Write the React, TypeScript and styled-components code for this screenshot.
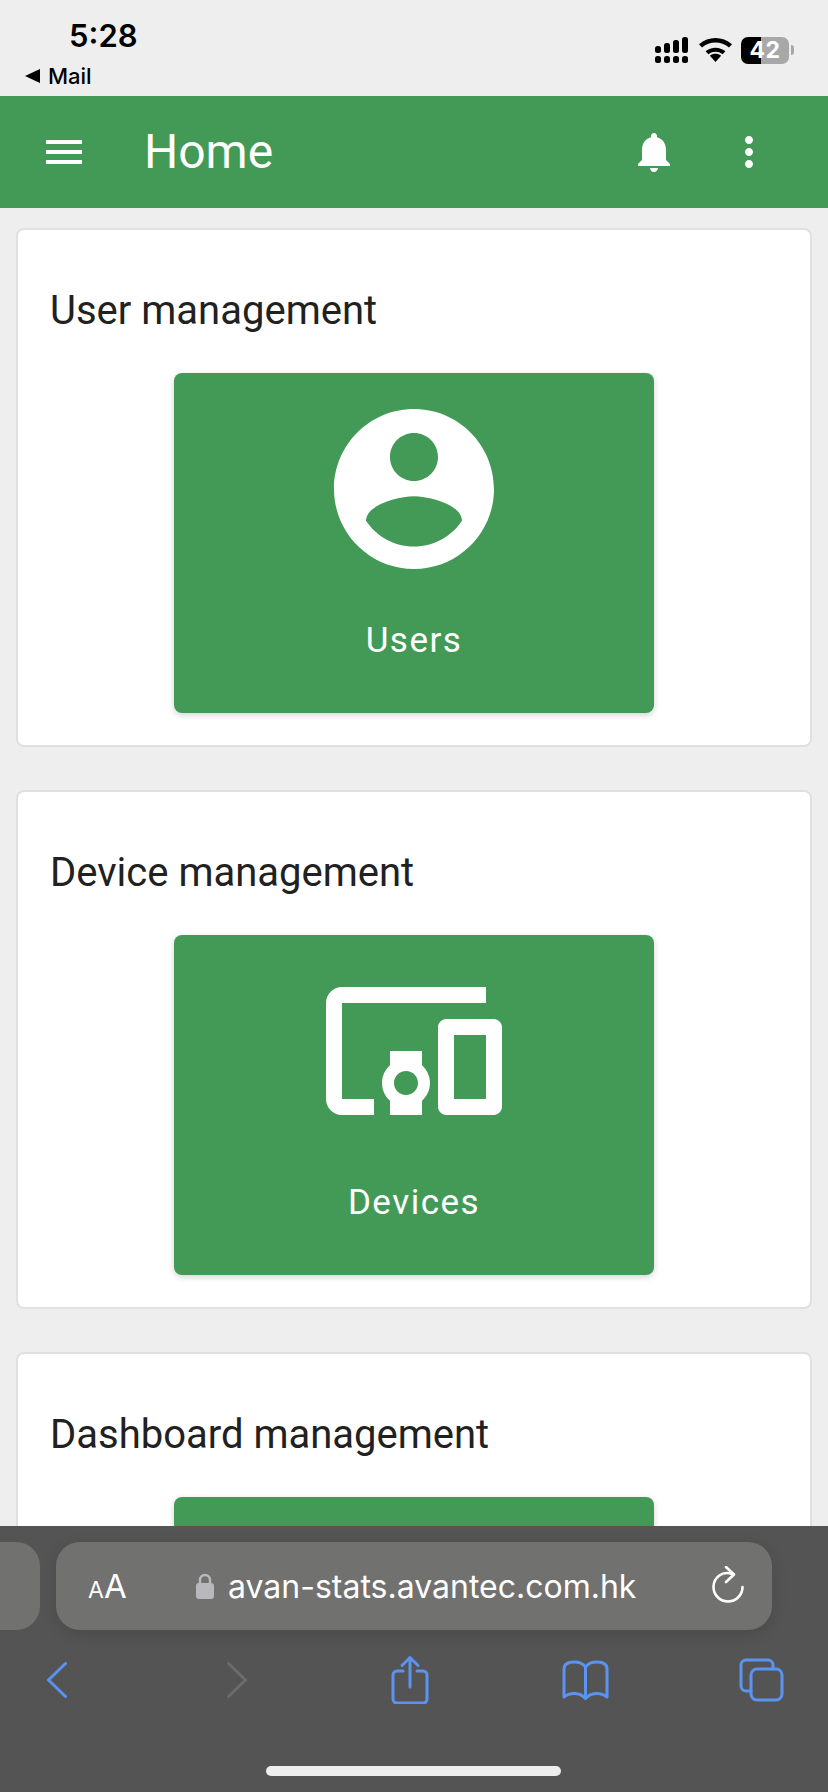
import styled, { createGlobalStyle } from 'styled-components';

const GlobalStyle = createGlobalStyle`
  html, body {
    margin: 0;
    padding: 0;
    background: #eeeeee;
    font-family: Roboto, "Liberation Sans", sans-serif;
  }
  * {
    box-sizing: border-box;
  }
`;

const Page = styled.div`
  position: relative;
  width: 828px;
  height: 1792px;
  overflow: hidden;
  background: #eeeeee;
`;

const StatusBar = styled.div`
  display: flex;
  justify-content: space-between;
  height: 96px;
  padding: 0 34px 0 25px;
  color: #000;
`;

const StatusLeft = styled.div`
  display: flex;
  flex-direction: column;
  padding-top: 18px;
`;

const Clock = styled.div`
  margin-left: 44px;
  height: 36px;
  font-family: Inter, sans-serif;
  font-size: 31px;
  font-weight: 600;
  line-height: 36px;
`;

const BackToMail = styled.div`
  display: flex;
  align-items: center;
  gap: 8px;
  margin-top: 10px;
  font-family: Inter, sans-serif;
  font-size: 22px;
  font-weight: 500;
  line-height: 24px;
`;

const StatusRight = styled.div`
  display: flex;
  align-items: center;
  padding-top: 4px;
  height: 96px;
`;

const Battery = styled.div`
  position: relative;
  display: flex;
  align-items: center;
  justify-content: center;
  width: 48px;
  height: 27px;
  margin-left: 9px;
  border-radius: 7px;
  overflow: hidden;
  background: linear-gradient(90deg, #000 0 20px, #a8a8a8 20px);
  color: #fff;
  font-family: Inter, sans-serif;
  font-size: 23px;
  font-weight: 700;
  letter-spacing: 0.5px;
`;

const BatteryNub = styled.div`
  width: 3px;
  height: 10px;
  margin-left: 2px;
  border-radius: 0 3px 3px 0;
  background: #a8a8a8;
`;

const AppBar = styled.header`
  display: flex;
  align-items: center;
  height: 112px;
  padding: 0 55px 0 40px;
  background: #439a57;
  color: #fff;
`;

const AppTitle = styled.h1`
  flex: 1;
  margin: 0 0 0 56px;
  font-size: 48px;
  font-weight: 400;
  line-height: 56px;
`;

const BarIcon = styled.svg<{ $gap?: number }>`
  flex: none;
  width: 48px;
  height: 48px;
  margin-left: ${p => p.$gap ?? 0}px;
  fill: #fff;
`;

const CardList = styled.main`
  display: flex;
  flex-direction: column;
  gap: 43px;
  padding: 20px 16px 0;
`;

const Card = styled.section`
  height: 519px;
  padding: 0 32px;
  border: 2px solid #e0e0e0;
  border-radius: 8px;
  background: #fff;
`;

const CardTitle = styled.h2`
  margin: 0;
  padding-top: 53px;
  height: 143px;
  color: #212121;
  font-size: 40px;
  font-weight: 400;
  line-height: 56px;
`;

const Tile = styled.div`
  display: flex;
  flex-direction: column;
  align-items: center;
  width: 480px;
  height: 340px;
  margin: 0 auto;
  padding-top: 20px;
  border-radius: 8px;
  background: #439a57;
  box-shadow: 0 2px 6px rgba(0, 0, 0, 0.18);
  color: #fff;
`;

const TileIcon = styled.svg`
  width: 192px;
  height: 192px;
  fill: #fff;
`;

const TileLabel = styled.div`
  margin-top: 32px;
  font-size: 35px;
  line-height: 48px;
  letter-spacing: 1.5px;
`;

const BrowserBar = styled.div`
  position: absolute;
  left: 0;
  right: 0;
  bottom: 0;
  height: 266px;
  background: #545454;
`;

const AddressRow = styled.div`
  display: flex;
  gap: 16px;
  height: 88px;
  margin-top: 16px;
`;

const SidePill = styled.div`
  width: 40px;
  border-radius: 0 24px 24px 0;
  background: #717170;
`;

const AddressPill = styled.div`
  display: flex;
  align-items: center;
  width: 716px;
  padding: 0 28px 0 32px;
  border-radius: 24px;
  background: #717170;
  box-shadow: 0 4px 16px rgba(0, 0, 0, 0.12);
  color: #fff;
`;

const TextSize = styled.div`
  display: flex;
  align-items: baseline;
  width: 108px;
  font-family: Inter, sans-serif;
  font-weight: 400;
`;

const SmallA = styled.span`
  font-size: 23px;
`;

const LargeA = styled.span`
  font-size: 33px;
`;

const LockIcon = styled.svg`
  flex: none;
  width: 18px;
  height: 26px;
`;

const Url = styled.div`
  flex: 1;
  margin-left: 14px;
  font-family: Inter, sans-serif;
  font-size: 32px;
  font-weight: 400;
  white-space: nowrap;
`;

const ReloadIcon = styled.svg`
  flex: none;
  width: 32px;
  height: 40px;
  fill: none;
  stroke: #fff;
  stroke-width: 2.6;
  stroke-linecap: round;
  stroke-linejoin: round;
`;

const NavRow = styled.nav`
  display: flex;
  align-items: center;
  height: 60px;
  margin-top: 20px;
  padding-left: 47px;
`;

const NavIcon = styled.svg<{ $gap?: number; $muted?: boolean }>`
  flex: none;
  margin-left: ${p => p.$gap ?? 0}px;
  fill: none;
  stroke: ${p => (p.$muted ? '#6c6c6c' : '#5b93f0')};
  stroke-width: 3;
  stroke-linecap: round;
  stroke-linejoin: round;
`;

const HomeIndicator = styled.div`
  position: absolute;
  left: 266px;
  bottom: 16px;
  width: 295px;
  height: 10px;
  border-radius: 5px;
  background: #eeeeee;
`;

export default function App() {
  return (
    <Page>
      <GlobalStyle />
      <StatusBar>
        <StatusLeft>
          <Clock>5:28</Clock>
          <BackToMail>
            <svg width="15" height="14" viewBox="0 0 15 14">
              <path d="M15 0v14L0 7z" fill="#000" />
            </svg>
            Mail
          </BackToMail>
        </StatusLeft>
        <StatusRight>
          <svg width="33" height="26" viewBox="0 0 33 26">
            <rect x="0" y="9" width="6" height="7" rx="2.5" />
            <rect x="9" y="6" width="6" height="10" rx="2.5" />
            <rect x="18" y="3" width="6" height="13" rx="2.5" />
            <rect x="27" y="0" width="6" height="16" rx="2.5" />
            <rect x="0" y="19" width="6" height="7" rx="2.5" />
            <rect x="9" y="19" width="6" height="7" rx="2.5" />
            <rect x="18" y="19" width="6" height="7" rx="2.5" />
            <rect x="27" y="19" width="6" height="7" rx="2.5" />
          </svg>
          <svg width="33" height="24" viewBox="0 0 33 24" style={{ marginLeft: 11 }}>
            <path d="M16.5 24l-5.6-6.2c3.2-2.6 8-2.6 11.2 0z" />
            <path d="M6.6 13.2l2.8 3c4.1-3.3 10.1-3.3 14.2 0l2.8-3c-5.7-4.7-14.1-4.7-19.8 0z" />
            <path d="M0 6.2l3 3.2c7.8-6.4 19.2-6.4 27 0l3-3.2C23.5-2 9.5-2 0 6.2z" />
          </svg>
          <Battery>42</Battery>
          <BatteryNub />
        </StatusRight>
      </StatusBar>

      <AppBar>
        <BarIcon viewBox="0 0 24 24">
          <path d="M3 18h18v-2H3v2zm0-5h18v-2H3v2zm0-7v2h18V6H3z" />
        </BarIcon>
        <AppTitle>Home</AppTitle>
        <BarIcon viewBox="0 0 24 24">
          <path d="M12 22c1.1 0 2-.9 2-2h-4c0 1.1.89 2 2 2zm6-6v-5c0-3.07-1.64-5.64-4.5-6.32V4c0-.83-.67-1.5-1.5-1.5s-1.5.67-1.5 1.5v.68C7.63 5.36 6 7.92 6 11v5l-2 2v1h16v-1l-2-2z" />
        </BarIcon>
        <BarIcon viewBox="0 0 24 24" $gap={47}>
          <path d="M12 8c1.1 0 2-.9 2-2s-.9-2-2-2-2 .9-2 2 .9 2 2 2zm0 2c-1.1 0-2 .9-2 2s.9 2 2 2 2-.9 2-2-.9-2-2-2zm0 6c-1.1 0-2 .9-2 2s.9 2 2 2 2-.9 2-2-.9-2-2-2z" />
        </BarIcon>
      </AppBar>

      <CardList>
        <Card>
          <CardTitle>User management</CardTitle>
          <Tile>
            <TileIcon viewBox="0 0 24 24">
              <path d="M12 2C6.48 2 2 6.48 2 12s4.48 10 10 10 10-4.48 10-10S17.52 2 12 2zm0 3c1.66 0 3 1.34 3 3s-1.34 3-3 3-3-1.34-3-3 1.34-3 3-3zm0 14.2c-2.5 0-4.71-1.28-6-3.22.03-1.99 4-3.08 6-3.08 1.99 0 5.97 1.09 6 3.08-1.29 1.94-3.5 3.22-6 3.22z" />
            </TileIcon>
            <TileLabel>Users</TileLabel>
          </Tile>
        </Card>
        <Card>
          <CardTitle>Device management</CardTitle>
          <Tile>
            <TileIcon viewBox="0 0 24 24">
              <path d="M3 6h18V4H3c-1.1 0-2 .9-2 2v12c0 1.1.9 2 2 2h4v-2H3V6zm10 6H9v1.78c-.61.55-1 1.33-1 2.22s.39 1.67 1 2.22V20h4v-1.78c.61-.55 1-1.34 1-2.22s-.39-1.67-1-2.22V12zm-2 5.5c-.83 0-1.5-.67-1.5-1.5s.67-1.5 1.5-1.5 1.5.67 1.5 1.5-.67 1.5-1.5 1.5zM22 8h-6c-.5 0-1 .5-1 1v10c0 .5.5 1 1 1h6c.5 0 1-.5 1-1V9c0-.5-.5-1-1-1zm-1 10h-4v-8h4v8z" />
            </TileIcon>
            <TileLabel>Devices</TileLabel>
          </Tile>
        </Card>
        <Card>
          <CardTitle>Dashboard management</CardTitle>
          <Tile />
        </Card>
      </CardList>

      <BrowserBar>
        <AddressRow>
          <SidePill />
          <AddressPill>
            <TextSize>
              <SmallA>A</SmallA>
              <LargeA>A</LargeA>
            </TextSize>
            <LockIcon viewBox="0 0 18 26">
              <path d="M4 11V7a5 5 0 0 1 10 0v4" fill="none" stroke="#b9b9bd" strokeWidth="2.4" />
              <rect x="0" y="10" width="18" height="16" rx="3" fill="#b9b9bd" />
            </LockIcon>
            <Url>avan-stats.avantec.com.hk</Url>
            <ReloadIcon viewBox="0 0 32 40">
              <path d="M20 8C10 4.500 1.500 12 1.500 21a14.500 14.500 0 0 0 29 0" />
              <path d="M14 1l8 7.500-8 7.500" />
            </ReloadIcon>
          </AddressPill>
        </AddressRow>
        <NavRow>
          <NavIcon width="20" height="36" viewBox="0 0 20 36">
            <path d="M18.500 1.500L1.500 18l17 16.500" />
          </NavIcon>
          <NavIcon width="20" height="36" viewBox="0 0 20 36" $gap={160} $muted>
            <path d="M1.500 1.500L18.500 18l-17 16.500" />
          </NavIcon>
          <NavIcon width="38" height="48" viewBox="0 0 38 48" $gap={144}>
            <path d="M12 15H6a4 4 0 0 0-4 4v24a4 4 0 0 0 4 4h26a4 4 0 0 0 4-4V19a4 4 0 0 0-4-4h-6" />
            <path d="M19 31V2M11 9.500l8-8 8 8" />
          </NavIcon>
          <NavIcon width="47" height="40" viewBox="0 0 47 40" $gap={133}>
            <path d="M23.500 7C21 3.500 17 2 12.500 2 8 2 2 3 2 9v28c6-5 16-5 21.500 1.500C29 32 39 32 45 37V9c0-6-6-7-10.500-7C30 2 26 3.500 23.500 7v31.500" />
          </NavIcon>
          <NavIcon width="45" height="44" viewBox="0 0 45 44" $gap={130}>
            <path d="M12 33H7a5 5 0 0 1-5-5V7a5 5 0 0 1 5-5h22a5 5 0 0 1 5 5v4" />
            <rect x="12" y="11" width="31" height="31" rx="6" />
          </NavIcon>
        </NavRow>
        <HomeIndicator />
      </BrowserBar>
    </Page>
  );
}
